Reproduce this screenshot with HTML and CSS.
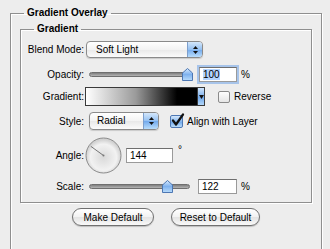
FILE: index.html
```html
<!DOCTYPE html>
<html lang="en">
<head>
    <meta charset="UTF-8">
    <title>Gradient Overlay</title>
    <link rel="stylesheet" href="styles.css">
</head>
<body>
    <fieldset class="group outer">
        <legend class="group-title outer-title">Gradient Overlay</legend>

        <fieldset class="group inner">
            <legend class="group-title inner-title">Gradient</legend>

            <!-- Blend mode -->
            <div class="row row-blend">
                <span class="label">Blend Mode:</span>
                <div class="popup popup-blend">
                    <span class="popup-text">Soft Light</span>
                    <span class="popup-arrows">
                        <svg width="7" height="10" viewBox="0 0 7 10"><polygon points="1,4 3.5,1 6,4" fill="#111"/><polygon points="1,6 3.5,9 6,6" fill="#111"/></svg>
                    </span>
                </div>
            </div>

            <!-- Opacity -->
            <div class="row row-opacity">
                <span class="label">Opacity:</span>
                <div class="slider">
                    <div class="track"></div>
                    <svg class="thumb" style="left: 93px" width="11" height="13" viewBox="0 0 11 13">
                        <defs>
                            <linearGradient id="thumbA" x1="0" y1="0" x2="0" y2="1">
                                <stop offset="0" stop-color="#d8ebff"/>
                                <stop offset="0.5" stop-color="#7fb2ee"/>
                                <stop offset="1" stop-color="#b9dcfb"/>
                            </linearGradient>
                        </defs>
                        <path d="M5.5 0.5 L10.5 5 L10.5 12.5 L0.5 12.5 L0.5 5 Z" fill="url(#thumbA)" stroke="#4d77b3"/>
                    </svg>
                </div>
                <div class="field field-opacity focused"><span class="selected">100</span></div>
                <span class="unit">%</span>
            </div>

            <!-- Gradient -->
            <div class="row row-gradient">
                <span class="label">Gradient:</span>
                <div class="gradient">
                    <div class="gradient-fill"></div>
                    <span class="gradient-arrow">
                        <svg width="5" height="4" viewBox="0 0 5 4"><polygon points="0,0 5,0 2.5,4" fill="#111"/></svg>
                    </span>
                </div>
                <span class="check check-off"></span>
                <span class="check-label">Reverse</span>
            </div>

            <!-- Style -->
            <div class="row row-style">
                <span class="label">Style:</span>
                <div class="popup popup-style">
                    <span class="popup-text">Radial</span>
                    <span class="popup-arrows">
                        <svg width="7" height="10" viewBox="0 0 7 10"><polygon points="1,4 3.5,1 6,4" fill="#111"/><polygon points="1,6 3.5,9 6,6" fill="#111"/></svg>
                    </span>
                </div>
                <span class="check check-on">
                    <svg width="15" height="15" viewBox="0 0 15 15"><path d="M3 7.5 L6 11.5 L13 1.5" fill="none" stroke="#111" stroke-width="2.2" stroke-linecap="round" stroke-linejoin="round"/></svg>
                </span>
                <span class="check-label">Align with Layer</span>
            </div>

            <!-- Angle -->
            <div class="row row-angle">
                <span class="label">Angle:</span>
                <svg class="dial" width="37" height="37" viewBox="0 0 37 37">
                    <defs>
                        <radialGradient id="dialFill" cx="0.5" cy="0.55" r="0.5">
                            <stop offset="0" stop-color="#d9d9d9"/>
                            <stop offset="0.75" stop-color="#f2f2f2"/>
                            <stop offset="1" stop-color="#d2d2d2"/>
                        </radialGradient>
                    </defs>
                    <circle cx="18.5" cy="18.5" r="17.5" fill="url(#dialFill)" stroke="#8c8c8c"/>
                    <line x1="18.5" y1="18.5" x2="5.8" y2="9.3" stroke="#555" stroke-width="0.8"/>
                    <circle cx="18.5" cy="18.5" r="1" fill="#777"/>
                </svg>
                <div class="field field-angle">144</div>
                <span class="degree">°</span>
            </div>

            <!-- Scale -->
            <div class="row row-scale">
                <span class="label">Scale:</span>
                <div class="slider">
                    <div class="track"></div>
                    <svg class="thumb" style="left: 73px" width="11" height="13" viewBox="0 0 11 13">
                        <defs>
                            <linearGradient id="thumbB" x1="0" y1="0" x2="0" y2="1">
                                <stop offset="0" stop-color="#d8ebff"/>
                                <stop offset="0.5" stop-color="#7fb2ee"/>
                                <stop offset="1" stop-color="#b9dcfb"/>
                            </linearGradient>
                        </defs>
                        <path d="M5.5 0.5 L10.5 5 L10.5 12.5 L0.5 12.5 L0.5 5 Z" fill="url(#thumbB)" stroke="#4d77b3"/>
                    </svg>
                </div>
                <div class="field field-scale">122</div>
                <span class="unit">%</span>
            </div>
        </fieldset>

        <div class="buttons">
            <button class="btn btn-make" type="button">Make Default</button>
            <button class="btn btn-reset" type="button">Reset to Default</button>
        </div>
    </fieldset>
</body>
</html>
```

FILE: styles.css
```css
* {
    box-sizing: border-box;
}

body {
    margin: 0;
    background: #ededed;
    font-family: "Liberation Sans", Arial, sans-serif;
    font-size: 10px;
    color: #000;
    overflow: hidden;
}

/* group boxes */
.group {
    margin: 0;
    border: 1px solid #8f8f8f;
    box-shadow: 1px 1px 0 #fff, inset 1px 1px 0 #fff;
    min-inline-size: 0;
}

.group-title {
    padding: 0 3px;
    font-weight: bold;
    line-height: 12px;
}

.outer {
    margin: 7px 0 0 10px;
    width: 312px;
    padding: 4px 9px 30px 9px;
}

.outer-title {
    margin-left: 4px;
}

.inner {
    width: 292px;
    padding: 6px 0 8px 0;
}

.inner-title {
    margin-left: 13px;
}

/* rows */
.row {
    display: flex;
    align-items: center;
}

.label {
    width: 63px;
    text-align: right;
    flex: none;
}

.row-blend { height: 17px; }
.row-opacity { height: 15px; margin-top: 9px; }
.row-gradient { height: 19px; margin-top: 5px; }
.row-style { height: 18px; margin-top: 6px; }
.row-angle { height: 36px; margin-top: 7px; }
.row-scale { height: 15px; margin-top: 6px; }

/* popup menus */
.popup {
    display: flex;
    height: 100%;
    border: 1px solid #8a8a8a;
    border-radius: 4px;
    overflow: hidden;
    background: linear-gradient(#ffffff, #f3f3f3 50%, #e8e8e8 51%, #fbfbfb);
    box-shadow: 0 1px 1px rgba(0, 0, 0, 0.15);
}

.popup-blend {
    margin-left: 2px;
    width: 117px;
}

.popup-style {
    margin-left: 5px;
    width: 70px;
}

.popup-text {
    flex: 1;
    padding-left: 9px;
    line-height: 15px;
}

.popup-style .popup-text {
    padding-left: 7px;
    line-height: 16px;
}

.popup-arrows {
    width: 15px;
    display: flex;
    align-items: center;
    justify-content: center;
    border-left: 1px solid #7d9fcd;
    background: linear-gradient(#d4e7fb, #94c0f1 50%, #72a9ec 51%, #b9ddfb);
}

/* sliders */
.slider {
    position: relative;
    margin-left: 5px;
    width: 101px;
    height: 15px;
}

.track {
    position: absolute;
    left: 0;
    right: 0;
    top: 5px;
    height: 5px;
    border-radius: 3px;
    border: 1px solid #6f6f6f;
    background: linear-gradient(#7f7f7f, #b5b5b5);
}

.thumb {
    position: absolute;
    top: 1px;
}

/* text fields */
.field {
    height: 15px;
    border: 1px solid #9a9a9a;
    border-top-color: #6e6e6e;
    background: #fff;
    padding-left: 3px;
    line-height: 13px;
}

.field-opacity {
    margin-left: 9px;
    width: 38px;
}

.focused {
    box-shadow: 0 0 0 2px #a7c4ea;
}

.selected {
    background: #b5d5ff;
}

.field-angle {
    margin-left: 4px;
    width: 47px;
}

.field-scale {
    margin-left: 8px;
    width: 39px;
}

.unit {
    margin-left: 4px;
}

.degree {
    align-self: flex-start;
    margin-top: 7px;
    margin-left: 5px;
    font-size: 10px;
}

/* gradient swatch */
.gradient {
    display: flex;
    margin-left: 1px;
    width: 120px;
    height: 100%;
    border: 1px solid #3a3a3a;
}

.gradient-fill {
    flex: 1;
    background: linear-gradient(to right, #ffffff, #9a9a9a 45%, #000000 82%);
}

.gradient-arrow {
    width: 7px;
    display: flex;
    align-items: center;
    justify-content: center;
    border-left: 1px solid #3a3a3a;
    background: linear-gradient(#cfe4fb, #7fb2ee 50%, #6aa4ea 51%, #b2d6f8);
}

/* checkboxes */
.check {
    position: relative;
    flex: none;
    border-radius: 2px;
}

.check-off {
    margin-left: 13px;
    width: 12px;
    height: 12px;
    border: 1px solid #8a8a8a;
    background: linear-gradient(#ffffff, #e6e6e6);
}

.check-on {
    margin-left: 11px;
    width: 13px;
    height: 13px;
    border: 1px solid #4d77b3;
    background: linear-gradient(#d4e7fb, #86b7ef 50%, #6aa4ea 51%, #b9ddfb);
}

.check-on svg {
    position: absolute;
    left: -1px;
    top: -3px;
}

.check-label {
    margin-left: 4px;
}

.dial {
    margin-left: 1px;
    flex: none;
}

/* buttons */
.buttons {
    display: flex;
    justify-content: center;
    gap: 17px;
    margin-top: 5px;
}

.btn {
    height: 18px;
    padding: 0;
    border: 1px solid #707070;
    border-radius: 9px;
    background: linear-gradient(#ffffff, #f2f2f2 50%, #e3e3e3 51%, #f9f9f9);
    box-shadow: 0 1px 1px rgba(0, 0, 0, 0.2);
    font-family: "Liberation Sans", Arial, sans-serif;
    font-size: 10px;
    color: #000;
}

.btn-make {
    width: 82px;
}

.btn-reset {
    width: 89px;
}
```
